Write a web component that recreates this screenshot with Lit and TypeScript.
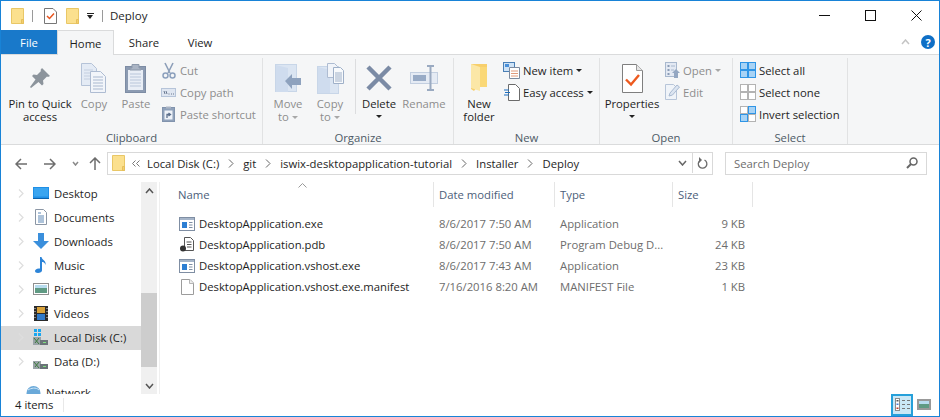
import { LitElement, html, css, svg } from "lit";
import { customElement } from "lit/decorators.js";

// small helper so every icon is an svg with 1:1 pixel units
const ico = (w: number, h: number, body: unknown) =>
  html`<svg width=${w} height=${h} viewBox="0 0 ${w} ${h}" fill="none">${body}</svg>`;

const folderSmall = ico(13, 16, svg`
  <path d="M.5.5h12v15H.5z" fill="#fbe08e" stroke="#e9c766"/>
  <path d="M10.5 11.5h2v4h-2z" fill="#f4cf6d" stroke="#e5bf5c"/>`);

const checkDocSmall = ico(13, 16, svg`
  <path d="M.5.5h8.500l3.500 3.500v11.500H.5z" fill="#fff" stroke="#777"/>
  <path d="M3 8l2.500 2.500L10 5.500" stroke="#e8541e" stroke-width="1.500"/>`);

const pin = ico(22, 22, svg`
  <path d="M13 1l8 8-2 1-1-.5-4 4 .5 3.500-1.500 1.500-3.500-3.500L2 21l-1-1 5.500-7.500L3 9l1.500-1.500 3.500.5 4-4-.5-1z" fill="#8c949c"/>`);

const copyLg = ico(26, 30, svg`
  <path d="M.5.5h10l5 5v17H.5z" fill="#e4ebf5" stroke="#b5c3d8"/>
  <path d="M3 7h9M3 10h9M3 13h9M3 16h9" stroke="#c4cfe0"/>
  <path d="M9.500 8.500h10l5 5v16h-15z" fill="#f2f5fa" stroke="#aebcd2"/>
  <path d="M12 14h10M12 17h10M12 20h10M12 23h10M12 26h10" stroke="#a9b8cf"/>`);

const pasteLg = ico(22, 30, svg`
  <rect x=".5" y="3.500" width="20" height="26" fill="#8c9bb2" stroke="#7d8ca4"/>
  <rect x="3" y="7" width="15" height="20" fill="#e9eef6"/>
  <path d="M5 11h11M5 14h11M5 17h11M5 20h11M5 23h11" stroke="#b9c6da"/>
  <path d="M7 5V1.500h7V5h2v2H5V5z" fill="#aab4c4" stroke="#8d99ab"/>`);

const cut = ico(14, 17, svg`
  <path d="M3 1l5 10M11 1L6 11" stroke="#8d9fb9" stroke-width="1.600"/>
  <circle cx="3.500" cy="13.500" r="2.500" stroke="#8ca0bd" stroke-width="1.500"/>
  <circle cx="10.500" cy="13.500" r="2.500" stroke="#8ca0bd" stroke-width="1.500"/>`);

const copyPath = ico(15, 9, svg`
  <rect x=".5" y=".5" width="14" height="8" fill="#dfe6f1" stroke="#b6c4d9"/>
  <path d="M3 3l1 3M5 3l1 3M7.500 6h1M10 6h1M12 6h1" stroke="#68778f"/>`);

const pasteShortcut = ico(13, 16, svg`
  <rect x=".5" y="1.500" width="12" height="14" fill="#8fa1ba" stroke="#8193ad"/>
  <rect x="2.500" y="4.500" width="8" height="9" fill="#eef2f8"/>
  <path d="M4 .5h5v2H4z" fill="#aab4c4"/>
  <path d="M5 12V8.500h3M6.500 7l2 1.500-2 1.500" stroke="#5c6f8c" stroke-width="1.300"/>`);

const moveTo = ico(27, 28, svg`
  <rect x=".5" y=".5" width="21" height="27" fill="#dbe5f2" stroke="#c8d6e8"/>
  <path d="M1 1l12 3v24H1z" fill="#cfdcee"/>
  <path d="M10 17l7-7v4h9v7h-9v4z" fill="#8ea2be"/>`);

const copyTo = ico(27, 31, svg`
  <rect x=".5" y="3.500" width="21" height="27" fill="#dbe5f2" stroke="#c8d6e8"/>
  <path d="M1 4l12 3v23H1z" fill="#cfdcee"/>
  <path d="M10.500.5h7l3 3v11h-10z" fill="#f1f4f9" stroke="#aebcd2"/>
  <path d="M16.500 4.500h7l3 3v13h-10z" fill="#f8fafc" stroke="#9fb0c8"/>
  <path d="M18 10h7M18 12h7M18 14h7M18 16h7M18 18h7" stroke="#9fb0c8"/>`);

const del = ico(26, 26, svg`
  <path d="M2 2l22 22M24 2L2 24" stroke="#7b8ba5" stroke-width="4.500"/>`);

const rename = ico(28, 26, svg`
  <rect x=".5" y="7.500" width="27" height="11" fill="#e5ebf4" stroke="#c3cfe0"/>
  <rect x="3" y="10" width="13" height="6" fill="#98abc6"/>
  <path d="M17 1h7M17 25h7M20.500 1v24" stroke="#9aaac1" stroke-width="2"/>`);

const newFolder = ico(18, 29, svg`
  <path d="M1 0h16v23H7l-3 4-3-2z" fill="#f7cf6c"/>
  <path d="M1 0l9 3v24l-9-3z" fill="#fbe7a7"/>
  <path d="M10 3h7v20h-7z" fill="#fad877"/>`);

const newItem = ico(17, 17, svg`
  <rect x=".5" y=".5" width="11" height="9" fill="#cfe3f6" stroke="#4a7fb5"/>
  <rect x="2" y="2" width="4" height="3" fill="#4a90d9"/>
  <path d="M6.500 5.500h10v11h-10z" fill="#fff" stroke="#7c8a9e"/>
  <path d="M8 9h7M8 11.500h7M8 14h7" stroke="#e09a7c"/>`);

const easyAccess = ico(16, 17, svg`
  <path d="M4.500.5h7l4 4v12h-11z" fill="#fff" stroke="#6b6b6b"/>
  <path d="M0 6h5M1 8.500h5M0 11h5" stroke="#1d6fc0"/>`);

const propsLg = ico(21, 29, svg`
  <path d="M.5.500h14l6 6v22H.5z" fill="#fff" stroke="#7f7f7f"/>
  <path d="M14.500.500v6h6" fill="#e6e6e6" stroke="#9a9a9a"/>
  <path d="M4 15.500l5 5L17 11" stroke="#ed5a1f" stroke-width="2.400"/>`);

const openIco = ico(15, 16, svg`
  <rect x=".5" y=".5" width="11" height="14" fill="#e3e9f3" stroke="#a8b8ce"/>
  <path d="M2.500 3h2v2h-2zM2.500 7h2v2h-2zM2.500 11h2v2h-2z" fill="#8a9bb5"/>
  <path d="M6 4h4M6 8h3" stroke="#a8b8ce"/>
  <path d="M7 11l4-4 4 4h-2v5H9v-5z" fill="#94a7c2"/>`);

const editIco = ico(15, 16, svg`
  <path d="M.5.500h8l3 3v12h-11z" fill="#f0f4f9" stroke="#b7c5d9"/>
  <path d="M4 12l1-3 7-8 2.500 2-7 8z" fill="#dce5f1" stroke="#a9bad1"/>`);

const cell = (x: number, y: number, on: boolean) =>
  on
    ? svg`<rect x=${x} y=${y} width="7" height="7" fill="#a8d3f5" stroke="#2f95e6"/>`
    : svg`<rect x=${x} y=${y} width="7" height="7" fill="#fff" stroke="#b3b3b3"/>`;

const selectIco = (a: boolean, b: boolean, c: boolean, d: boolean) =>
  ico(16, 16, svg`${cell(0.5, 0.5, a)}${cell(8.5, 0.5, b)}${cell(0.5, 8.5, c)}${cell(8.5, 8.5, d)}`);

const exeIco = ico(16, 14, svg`
  <rect x=".5" y=".5" width="15" height="13" fill="#fff" stroke="#7f8ea3"/>
  <rect x="1" y="1" width="14" height="2" fill="#a6b5c9"/>
  <rect x="3" y="5" width="5" height="6" fill="#2d7fd3"/>
  <path d="M10 5.500h3.500M10 8h3.500M10 10.500h3.500" stroke="#7f8ea3"/>`);

const pdbIco = ico(14, 15, svg`
  <path d="M4.500.5h6l3 3v10h-9z" fill="#fff" stroke="#555"/>
  <path d="M6.500 5h5M7 7.500h4.500M7 10h4.500" stroke="#555"/>
  <circle cx="3" cy="11.500" r="3" fill="#333"/>`);

const manifestIco = ico(13, 16, svg`
  <path d="M.5.500h8.500l3.500 3.500v11.500H.5z" fill="#fff" stroke="#9c9c9c"/>
  <path d="M8.500.500v4h4" fill="#eee" stroke="#b5b5b5"/>`);

const desktopIco = ico(16, 12, svg`
  <rect x="0" y="0" width="16" height="11" fill="#1f8fe6"/>
  <rect x="1" y="1" width="14" height="8.500" fill="#3aa5f0"/>
  <path d="M0 11h16v1H0z" fill="#0c63ad"/>`);

const documentsIco = ico(12, 16, svg`
  <path d="M.5.500h8l3 3v12h-11z" fill="#fff" stroke="#8b96a5"/>
  <path d="M3 4h3M3 7h6M3 9h6M3 11h6M3 13h6" stroke="#5d87b5"/>`);

const downloadsIco = ico(16, 16, svg`
  <path d="M5 0h6v8h5l-8 8-8-8h5z" fill="#3a8fdc"/>`);

const musicIco = ico(12, 16, svg`
  <path d="M5 0h1.500c.5 3 5 3.500 4 8-.5-2.500-2.500-3-3.500-3v8.500C7 15 5 16 3 16s-3-1-3-2 1.500-3 5-2.500z" fill="#2c84d8"/>`);

const picturesIco = ico(16, 12, svg`
  <rect x=".5" y=".5" width="15" height="11" fill="#fff" stroke="#8f8f8f"/>
  <rect x="2" y="2" width="12" height="3" fill="#b8dcef"/>
  <rect x="2" y="5" width="12" height="5" fill="#5f9a83"/>`);

const thumbIco = ico(14, 11, svg`
  <rect x="1" y="1" width="12" height="9" fill="#fff" stroke="#999" stroke-width="2"/>
  <rect x="2" y="2" width="10" height="3" fill="#b8dcef"/>
  <rect x="2" y="5" width="10" height="4" fill="#5f9a83"/>`);

const videosIco = ico(14, 15, svg`
  <rect width="14" height="15" fill="#2a2a2a"/>
  <rect x="3" y="1" width="8" height="6" fill="#d9a23a"/>
  <rect x="3" y="8" width="8" height="6" fill="#2f79c9"/>
  <path d="M1 2v1M1 5v1M1 8v1M1 11v1M13 2v1M13 5v1M13 8v1M13 11v1" stroke="#ddd"/>`);

const diskBody = svg`
  <path d="M0 8h8v8H0z" fill="#9aa3a8"/>
  <path d="M1 9l5 6M6 9l-4 5" stroke="#3d7a3d"/>
  <rect x="7" y="11" width="8" height="5" fill="#6a7378"/>
  <rect x="10" y="13" width="3" height="1" fill="#7fe07f"/>`;

const localDiskIco = ico(16, 16, svg`
  <path d="M1 0h3v3H1zM5 0h3v3H5zM1 4h3v3H1zM5 4h3v3H5z" fill="#19a7f0"/>${diskBody}`);
const dataDiskIco = ico(16, 16, diskBody);

const networkIco = ico(17, 14, svg`
  <circle cx="8.500" cy="8" r="7" fill="#6aa9d9"/>
  <path d="M3 5c3-2 8-3 11 0" stroke="#cfe6f7"/>`);

const arrowBack = ico(12, 12, svg`<path d="M6 1L1 6l5 5M1 6h11" stroke="#6d6d6d" stroke-width="1.500"/>`);
const arrowFwd = ico(12, 12, svg`<path d="M6 1l5 5-5 5M11 6H0" stroke="#6d6d6d" stroke-width="1.500"/>`);
const arrowUp = ico(12, 13, svg`<path d="M1 6l5-5 5 5M6 1v12" stroke="#6d6d6d" stroke-width="1.500"/>`);
const chevDown = (c: string, w = 9, h = 6) =>
  ico(w, h, svg`<path d="M1 1l${(w - 2) / 2} ${h - 2}L${w - 1} 1" stroke=${c} stroke-width="1.500"/>`);
const chevRight = ico(6, 9, svg`<path d="M1 .5l4 4-4 4" stroke="#dedede" stroke-width="1.200"/>`);
const backDouble = ico(8, 7, svg`<path d="M3.500.5l-3 3 3 3M7.500.5l-3 3 3 3" stroke="#777"/>`);
const refresh = ico(11, 13, svg`
  <path d="M7.500 3A4.300 4.300 0 1 1 3 3.400" stroke="#6a6a6a" stroke-width="1.300"/>
  <path d="M2 0l3 3-3 3z" fill="#6a6a6a"/>`);
const search = ico(12, 12, svg`
  <circle cx="7.500" cy="4.500" r="3.500" stroke="#666" stroke-width="1.500"/>
  <path d="M5 7l-4 4" stroke="#666" stroke-width="2"/>`);
const caret = html`<span class="caret"></span>`;
const caretInline = html`<span class="caret inl"></span>`;

const detailsIco = ico(15, 13, svg`
  <rect x=".5" y=".5" width="4" height="12" fill="#fff" stroke="#8b8b8b"/>
  <path d="M1.500 2h2v1.500h-2z" fill="#555"/><path d="M1.500 5.500h2V7h-2z" fill="#4a7fd0"/><path d="M1.500 9.500h2V11h-2z" fill="#c0392b"/>
  <path d="M7 2.500h3M12 2.500h3M7 6.500h3M12 6.500h3M7 10.500h3M12 10.500h3" stroke="#777"/>`);

type Small = { icon: unknown; label: string; off?: boolean; caret?: boolean };
type Large = { icon: unknown; lines: string[]; w: number; off?: boolean; caret?: boolean };

const navItems = [
  { icon: desktopIco, label: "Desktop" },
  { icon: documentsIco, label: "Documents" },
  { icon: downloadsIco, label: "Downloads" },
  { icon: musicIco, label: "Music" },
  { icon: picturesIco, label: "Pictures" },
  { icon: videosIco, label: "Videos" },
  { icon: localDiskIco, label: "Local Disk (C:)", selected: true },
  { icon: dataDiskIco, label: "Data (D:)" },
];

const files = [
  { icon: exeIco, name: "DesktopApplication.exe", date: "8/6/2017 7:50 AM", type: "Application", size: "9 KB" },
  { icon: pdbIco, name: "DesktopApplication.pdb", date: "8/6/2017 7:50 AM", type: "Program Debug D...", size: "24 KB" },
  { icon: exeIco, name: "DesktopApplication.vshost.exe", date: "8/6/2017 7:43 AM", type: "Application", size: "23 KB" },
  { icon: manifestIco, name: "DesktopApplication.vshost.exe.manifest", date: "7/16/2016 8:20 AM", type: "MANIFEST File", size: "1 KB" },
];

const crumbs = ["Local Disk (C:)", "git", "iswix-desktopapplication-tutorial", "Installer", "Deploy"];

@customElement("app-root")
export class AppRoot extends LitElement {
  static styles = css`
    :host {
      display: block;
      width: 940px;
      height: 417px;
      font-family: "Open Sans", "Noto Sans", sans-serif;
      font-size: 11.3px;
      color: #1e1e1e;
    }
    svg { display: block; flex: none; }
    .window {
      box-sizing: border-box;
      height: 417px;
      border: 1px solid #1883d7;
      background: #fff;
      display: flex;
      flex-direction: column;
      overflow: hidden;
    }

    /* title bar */
    .title { height: 29px; display: flex; align-items: center; padding-left: 10px; flex: none; }
    .title .qs { width: 1px; height: 12px; background: #9a9a9a; margin: 0 11px 0 8px; }
    .title .qs.q2 { margin: 0 7px 0 0; }
    .title .gap { width: 9px; }
    .title .drop { width: 7px; height: 6px; margin: 0 8px; display: flex; flex-direction: column; gap: 1px; }
    .title .drop i { display: block; height: 1px; background: #222; }
    .title .drop b { display: block; width: 0; border: 3.5px solid transparent; border-top: 4px solid #222; border-bottom: 0; }
    .title .name { font-size: 11.5px; }
    .win-btns { margin-left: auto; display: flex; align-items: center; }
    .win-btns div { width: 46px; height: 29px; display: flex; align-items: center; justify-content: center; }

    /* tabs */
    .tabs { height: 25px; display: flex; flex: none; border-bottom: 1px solid #dadbdc; box-sizing: border-box; align-items: stretch; }
    .tab { width: 56px; display: flex; align-items: center; justify-content: center; }
    .tab.file { background: #1979ca; color: #fff; }
    .tab.home { width: 57px; margin-right: 2px; background: #f5f6f7; border: 1px solid #dadbdc; border-bottom: 0; margin-bottom: -1px; box-sizing: border-box; }
    .tabs-right { margin-left: auto; display: flex; align-items: center; gap: 11px; padding-right: 4px; }
    .help { width: 14px; height: 14px; border-radius: 50%; background: #0f6fc6; color: #fff; font-size: 11px; font-weight: 700; display: flex; align-items: center; justify-content: center; }

    /* ribbon */
    .ribbon { height: 90px; flex: none; background: #f5f6f7; border-bottom: 1px solid #dadbdc; box-sizing: border-box; display: flex; padding-top: 3px; }
    .group { display: flex; flex-direction: column; border-right: 1px solid #e1e2e3; height: 86px; box-sizing: border-box; flex: none; }
    .g-clip { width: 262px; }
    .g-org { width: 191px; }
    .g-new { width: 146px; }
    .g-open { width: 133px; }
    .g-sel { width: 115px; }
    .body { flex: 1; min-height: 0; display: flex; align-items: flex-start; padding: 1px 0 0 4px; }
    .g-clip .body { padding-left: 7px; }
    .g-clip .smalls { margin-left: 3px; }
    .g-open .body { padding-left: 2px; }
    .g-open .small .pic { width: 17px; }
    .g-sel .body { padding-left: 3px; }
    .glabel { text-align: center; color: #4d5a66; height: 15px; line-height: 13px; padding-top: 2px; box-sizing: border-box; flex: none; }
    .large { display: flex; flex-direction: column; align-items: center; flex: none; line-height: 13px; white-space: nowrap; }
    .large .pic { height: 38px; display: flex; align-items: center; justify-content: center; }
    .off { color: #8d8d8d; }
    .caret { display: inline-block; width: 0; border: 3px solid transparent; border-top: 3.5px solid #222; border-bottom: 0; vertical-align: middle; margin-left: 3px; }
    .off .caret { border-top-color: #a8a8a8; }
    .large .caret { margin: 5px 0 0; display: block; }
    .large .caret.inl { margin: 0 0 0 3px; display: inline-block; }
    .vsep { width: 1px; height: 55px; background: #dcdddf; margin: 0 1px 0 4px; flex: none; }
    .smalls { display: flex; flex-direction: column; margin-left: 2px; }
    .small { height: 22px; display: flex; align-items: center; white-space: nowrap; }
    .small .pic { width: 19px; display: flex; justify-content: center; margin-right: 2px; }

    /* address row */
    .addr { height: 37px; flex: none; display: flex; align-items: center; padding-left: 14px; box-sizing: border-box; }
    .nav-arrows { display: flex; align-items: center; width: 92px; }
    .nav-arrows .a2 { margin-left: 17px; }
    .nav-arrows .a3 { margin-left: 16px; }
    .nav-arrows .a4 { margin-left: 10px; }
    .path { width: 606px; height: 23px; box-sizing: border-box; border: 1px solid #d9d9d9; display: flex; align-items: center; padding: 0 0 1px 4px; }
    .path .back { margin: 0 7px 0 7px; }
    .crumb { display: flex; align-items: center; }
    .crumb svg { margin: 0 9px; }
    .path .end { margin-left: auto; display: flex; align-items: center; height: 100%; }
    .path .end .dd { width: 20px; display: flex; justify-content: center; }
    .path .end .rf { width: 19px; height: 100%; border-left: 1px solid #d9d9d9; display: flex; align-items: center; justify-content: center; }
    .sbox { width: 202px; height: 23px; box-sizing: border-box; border: 1px solid #d9d9d9; margin-left: 12px; display: flex; align-items: center; justify-content: space-between; padding: 0 8px 1px; color: #6d6d6d; }

    /* main */
    .main { flex: 1; min-height: 0; display: flex; }
    .tree { width: 140px; flex: none; overflow: hidden; display: flex; flex-direction: column; }
    .tree-row { height: 24px; flex: none; display: flex; align-items: center; padding: 0 0 2px 17px; box-sizing: border-box; }
    .tree-row.sel { background: #d9d9d9; }
    .tree-row .pic { width: 16px; margin-left: 9px; margin-right: 5px; display: flex; justify-content: center; }
    .tree-net { margin-top: 6px; padding-left: 24px; display: flex; align-items: center; height: 24px; gap: 4px; flex: none; }
    .bar { width: 16px; flex: none; background: #f0f0f0; display: flex; flex-direction: column; align-items: center; justify-content: space-between; position: relative; }
    .bar .arr { height: 17px; display: flex; align-items: center; }
    .bar .thumb { position: absolute; left: 0; right: 0; top: 111px; height: 74px; background: #cdcdcd; }
    .split { width: 2px; border-right: 1px solid #efefef; flex: none; }
    .list { flex: 1; display: flex; flex-direction: column; position: relative; }
    .sort { position: absolute; left: 138px; top: 1px; }
    .cols { display: grid; grid-template-columns: 274px 121px 118px 80px; }
    .head { height: 25px; display: flex; align-items: center; color: #4c607a; padding-left: 5px; border-right: 1px solid #e5e5e5; box-sizing: border-box; }
    .head.first { padding-left: 18px; }
    .rows { margin-top: 6px; }
    .row { height: 21px; align-items: center; }
    .row > div { padding-left: 5px; color: #6d6d6d; white-space: nowrap; overflow: hidden; }
    .row .fname { padding-left: 19px; color: #1e1e1e; display: flex; align-items: center; }
    .row .fname .pic { width: 16px; margin-right: 4px; display: flex; justify-content: center; }
    .row .fsize { text-align: right; padding: 0 8px 0 0; }

    /* status */
    .status { height: 22px; flex: none; display: flex; align-items: center; padding: 0 0 1px 14px; box-sizing: border-box; }
    .status .sp { width: 1px; height: 14px; background: #e8e8e8; margin-left: 10px; }
    .views { margin-left: auto; display: flex; align-items: center; margin-right: 8px; gap: 4px; }
    .views .on { width: 22px; height: 22px; box-sizing: border-box; background: #cbe8f6; border: 2px solid #26a0da; display: flex; align-items: center; justify-content: center; }
  `;

  private large(b: Large) {
    return html`<div class="large ${b.off ? "off" : ""}" style="width:${b.w}px">
      <div class="pic">${b.icon}</div>
      ${b.lines.map((l, i) =>
        html`<div>${l}${b.off && b.caret && i === b.lines.length - 1 ? caretInline : ""}</div>`)}
      ${b.caret && !b.off ? caret : ""}
    </div>`;
  }

  private smalls(items: Small[]) {
    return html`<div class="smalls">
      ${items.map(
        (s) => html`<div class="small ${s.off ? "off" : ""}">
          <div class="pic">${s.icon}</div><span>${s.label}</span>${s.caret ? caret : ""}
        </div>`
      )}
    </div>`;
  }

  render() {
    return html`<div class="window">
      <div class="title">
        ${folderSmall}<span class="qs"></span>${checkDocSmall}
        <span class="gap"></span>${folderSmall}
        <span class="drop"><i></i><b></b></span><span class="qs q2"></span>
        <span class="name">Deploy</span>
        <div class="win-btns">
          <div>${ico(11, 1, svg`<path d="M0 .5h11" stroke="#111"/>`)}</div>
          <div>${ico(11, 11, svg`<rect x=".5" y=".5" width="10" height="10" stroke="#111"/>`)}</div>
          <div>${ico(11, 11, svg`<path d="M.5.500l10 10M10.500.500l-10 10" stroke="#111"/>`)}</div>
        </div>
      </div>

      <div class="tabs">
        <div class="tab file">File</div>
        <div class="tab home">Home</div>
        <div class="tab">Share</div>
        <div class="tab">View</div>
        <div class="tabs-right">
          ${ico(9, 6, svg`<path d="M1 5l3.500-4L8 5" stroke="#c4c4c4" stroke-width="1.500"/>`)}
          <div class="help">?</div>
        </div>
      </div>

      <div class="ribbon">
        <div class="group g-clip">
          <div class="body">
            ${this.large({ icon: pin, lines: ["Pin to Quick", "access"], w: 64 })}
            ${this.large({ icon: copyLg, lines: ["Copy"], w: 44, off: true })}
            ${this.large({ icon: pasteLg, lines: ["Paste"], w: 40, off: true })}
            ${this.smalls([
              { icon: cut, label: "Cut", off: true },
              { icon: copyPath, label: "Copy path", off: true },
              { icon: pasteShortcut, label: "Paste shortcut", off: true },
            ])}
          </div>
          <div class="glabel">Clipboard</div>
        </div>
        <div class="group g-org">
          <div class="body">
            ${this.large({ icon: moveTo, lines: ["Move", "to"], w: 42, off: true, caret: true })}
            ${this.large({ icon: copyTo, lines: ["Copy", "to"], w: 42, off: true, caret: true })}
            <div class="vsep"></div>
            ${this.large({ icon: del, lines: ["Delete"], w: 44, caret: true })}
            ${this.large({ icon: rename, lines: ["Rename"], w: 46, off: true })}
          </div>
          <div class="glabel">Organize</div>
        </div>
        <div class="group g-new">
          <div class="body">
            ${this.large({ icon: newFolder, lines: ["New", "folder"], w: 42 })}
            ${this.smalls([
              { icon: newItem, label: "New item", caret: true },
              { icon: easyAccess, label: "Easy access", caret: true },
            ])}
          </div>
          <div class="glabel">New</div>
        </div>
        <div class="group g-open">
          <div class="body">
            ${this.large({ icon: propsLg, lines: ["Properties"], w: 60, caret: true })}
            ${this.smalls([
              { icon: openIco, label: "Open", off: true, caret: true },
              { icon: editIco, label: "Edit", off: true },
            ])}
          </div>
          <div class="glabel">Open</div>
        </div>
        <div class="group g-sel">
          <div class="body">
            ${this.smalls([
              { icon: selectIco(true, true, true, true), label: "Select all" },
              { icon: selectIco(false, false, false, false), label: "Select none" },
              { icon: selectIco(false, true, true, false), label: "Invert selection" },
            ])}
          </div>
          <div class="glabel">Select</div>
        </div>
      </div>

      <div class="addr">
        <div class="nav-arrows">
          ${arrowBack}<span class="a2">${arrowFwd}</span>
          <span class="a3">${chevDown("#8a8a8a", 7, 5)}</span><span class="a4">${arrowUp}</span>
        </div>
        <div class="path">
          ${folderSmall}<span class="back">${backDouble}</span>
          ${crumbs.map(
            (c, i) => html`<span class="crumb">${c}${i < crumbs.length - 1
              ? ico(6, 9, svg`<path d="M1 .5l4 4-4 4" stroke="#666"/>`)
              : ""}</span>`
          )}
          <div class="end">
            <div class="dd">${chevDown("#666", 9, 6)}</div>
            <div class="rf">${refresh}</div>
          </div>
        </div>
        <div class="sbox"><span>Search Deploy</span>${search}</div>
      </div>

      <div class="main">
        <div class="tree">
          ${navItems.map(
            (n) => html`<div class="tree-row ${n.selected ? "sel" : ""}">
              ${chevRight}<div class="pic">${n.icon}</div><span>${n.label}</span>
            </div>`
          )}
          <div class="tree-net">${networkIco}<span>Network</span></div>
        </div>
        <div class="bar">
          <div class="arr">${ico(9, 6, svg`<path d="M1 5l3.500-4L8 5" stroke="#555" stroke-width="1.500"/>`)}</div>
          <div class="thumb"></div>
          <div class="arr">${chevDown("#555", 9, 6)}</div>
        </div>
        <div class="split"></div>
        <div class="list">
          <div class="sort">${ico(9, 5, svg`<path d="M.5 4.500L4.500.5l4 4" stroke="#9a9a9a"/>`)}</div>
          <div class="cols">
            <div class="head first">Name</div>
            <div class="head">Date modified</div>
            <div class="head">Type</div>
            <div class="head">Size</div>
          </div>
          <div class="rows">
            ${files.map(
              (f) => html`<div class="cols row">
                <div class="fname"><div class="pic">${f.icon}</div><span>${f.name}</span></div>
                <div>${f.date}</div>
                <div>${f.type}</div>
                <div class="fsize">${f.size}</div>
              </div>`
            )}
          </div>
        </div>
      </div>

      <div class="status">
        <span>4 items</span><span class="sp"></span>
        <div class="views">
          <div class="on">${detailsIco}</div>
          ${thumbIco}
        </div>
      </div>
    </div>`;
  }
}
